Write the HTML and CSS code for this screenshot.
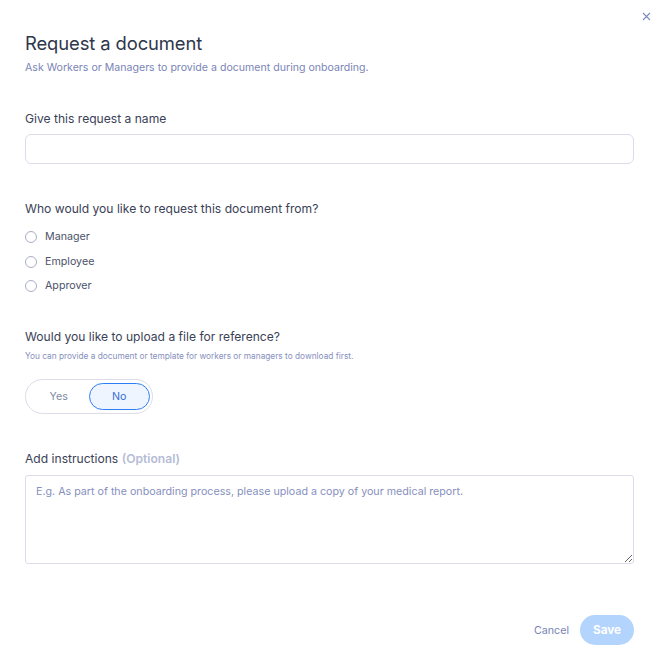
FILE: index.html
```html
<!DOCTYPE html>
<html>
<head>
<meta charset="utf-8">
<link rel="stylesheet" href="styles.css">
</head>
<body>
<div class="modal">
  <button class="close" aria-label="Close">
    <svg width="9" height="9" viewBox="0 0 9 9"><path d="M1 1L8 8M8 1L1 8" stroke="#7c8ac0" stroke-width="1.1" fill="none"/></svg>
  </button>
  <header class="head">
    <h1 class="title">Request a document</h1>
    <p class="subtitle">Ask Workers or Managers to provide a document during onboarding.</p>
  </header>

  <section class="field name-field">
    <label class="label">Give this request a name</label>
    <input class="input" type="text">
  </section>

  <section class="field who-field">
    <div class="label">Who would you like to request this document from?</div>
    <div class="radios">
      <label class="radio"><span class="dot"></span>Manager</label>
      <label class="radio"><span class="dot"></span>Employee</label>
      <label class="radio"><span class="dot"></span>Approver</label>
    </div>
  </section>

  <section class="field upload-field">
    <div class="label">Would you like to upload a file for reference?</div>
    <p class="hint">You can provide a document or template for workers or managers to download first.</p>
    <div class="toggle">
      <span class="seg">Yes</span>
      <span class="seg active">No</span>
    </div>
  </section>

  <section class="field instr-field">
    <div class="label">Add instructions <span class="optional">(Optional)</span></div>
    <textarea class="textarea" placeholder="E.g. As part of the onboarding process, please upload a copy of your medical report."></textarea>
  </section>

  <footer class="actions">
    <button class="cancel">Cancel</button>
    <button class="save">Save</button>
  </footer>
</div>
</body>
</html>
```

FILE: styles.css
```css
* { box-sizing: border-box; }
html, body { margin: 0; background: #fff; }
body { font-family: Inter, "Noto Sans", sans-serif; color: #353c52; }
.modal { position: relative; padding: 32px 27px 0 25px; width: 661px; }
.close { position: absolute; top: 12px; right: 10px; border: 0; background: none; padding: 0; width: 9px; height: 9px; cursor: pointer; }
.close svg { display: block; }
.title { margin: 0; font-size: 18.4px; font-weight: 400; color: #2f374b; line-height: 22px; letter-spacing: -0.1px; }
.subtitle { margin: 7px 0 0; font-size: 10.6px; color: #7b85b6; line-height: 14px; }
.field { display: flex; flex-direction: column; }
.label { font-size: 12.1px; line-height: 16px; color: #3a4156; }
.name-field { margin-top: 36px; }
.input { margin-top: 7px; height: 30px; border: 1px solid #dcdcea; border-radius: 6px; width: 609px; }
.who-field { margin-top: 37px; }
.radios { display: flex; flex-direction: column; gap: 8.5px; margin-top: 12px; }
.radio { display: flex; align-items: center; font-size: 10.7px; line-height: 16px; color: #4c5369; }
.dot { width: 12px; height: 12px; border: 1px solid #a8adc4; border-radius: 50%; margin-right: 8px; }
.upload-field { margin-top: 35px; }
.hint { margin: 5px 0 0; font-size: 8.3px; line-height: 12px; color: #8790bd; }
.toggle { margin-top: 17px; display: flex; width: 128px; height: 35px; padding: 3px 2px 3px 3px; border: 1px solid #dcdde8; border-radius: 18px; }
.seg { flex: 1; display: flex; align-items: center; justify-content: center; font-size: 10.7px; color: #808aa6; border-radius: 15px; }
.seg.active { background: #eef5ff; border: 1px solid #2d7df5; color: #3a6fd0; }
.instr-field { margin-top: 37px; }
.optional { color: #b6bcd6; font-weight: 600; }
.textarea { margin-top: 8px; width: 609px; height: 89px; border: 1px solid #dcdcea; border-radius: 3px; padding: 9px 10px; font-family: Inter, sans-serif; font-size: 10.7px; resize: vertical; }
.textarea::placeholder { color: #8790bd; }
.actions { display: flex; justify-content: flex-end; align-items: center; gap: 11px; margin-top: 51px; padding-right: 0; width: 609px; }
.cancel { border: 0; background: none; font-family: Inter, sans-serif; font-size: 10.7px; color: #7683b4; padding: 0; }
.save { border: 0; background: #b3d4fd; color: #fff; font-family: Inter, sans-serif; font-weight: 700; font-size: 11.7px; width: 54px; height: 30px; border-radius: 15px; }
```
